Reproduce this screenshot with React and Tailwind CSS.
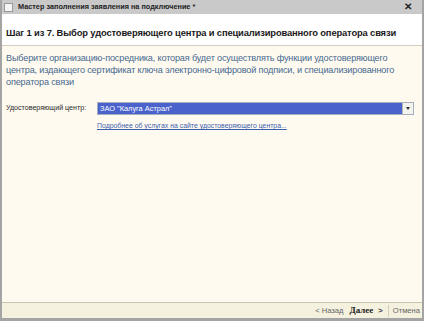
export default function App() {
  return (
    <div className="w-[424px] h-[321px] flex flex-col" style={{ fontFamily: '"Liberation Sans", Arial, sans-serif' }}>
      <div className="flex flex-col w-full h-full border-l-2 border-r-2 border-b-[3px] border-[#a4a4a4] bg-white">
        <div className="h-[14px] shrink-0 bg-[#c9c9c9] flex items-center pl-[2px] pr-[10px]">
          <div className="w-[9px] h-[9px] bg-[#f4f4f4] border border-[#9a9a9a] mr-[5px]"></div>
          <div className="text-[7.3px] font-bold text-[#222] flex-1 leading-none whitespace-nowrap">Мастер заполнения заявления на подключение *</div>
          <div className="text-[10px] font-bold text-[#222] leading-none">✕</div>
        </div>
        <div className="h-[32px] shrink-0 bg-white pt-[13px] px-[4px] border-b border-[#cfccc0]">
          <div className="text-[9.4px] leading-[12px] font-bold text-[#1a1a1a] whitespace-nowrap tracking-[-0.15px]">Шаг 1 из 7. Выбор удостоверяющего центра и специализированного оператора связи</div>
        </div>
        <div className="flex-1 bg-[#fffaf0] px-[4px] pt-[6px]">
          <div className="text-[9.1px] leading-[12px] text-[#46698f] tracking-[-0.15px]">
            <div className="whitespace-nowrap">Выберите организацию-посредника, которая будет осуществлять функции удостоверяющего</div>
            <div className="whitespace-nowrap">центра, издающего сертификат ключа электронно-цифровой подписи, и специализированного</div>
            <div className="whitespace-nowrap">оператора связи</div>
          </div>
          <div className="grid grid-cols-[91px_1fr] items-center mt-[14px] pr-[4px] gap-y-[6px]">
            <div className="text-[7.1px] text-[#2a2a2a] whitespace-nowrap">Удостоверяющий центр:</div>
            <div className="h-[13px] flex border border-[#a7aec0] bg-[#4a63cc]">
              <div className="flex-1 text-[7.4px] text-white leading-[11px] pl-[2px] whitespace-nowrap">ЗАО "Калуга Астрал"</div>
              <div className="w-[11px] bg-[#f3f3ee] border-l border-[#b8b8b8] flex items-center justify-center">
                <div className="w-0 h-0 border-l-[2.5px] border-r-[2.5px] border-t-[3px] border-l-transparent border-r-transparent border-t-[#333]"></div>
              </div>
            </div>
            <div></div>
            <div className="justify-self-start text-[6.9px] leading-[10px] text-[#3b5fae] underline whitespace-nowrap">Подробнее об услугах на сайте удостоверяющего центра...</div>
          </div>
        </div>
        <div className="h-[16px] shrink-0 bg-[#f4f1de] border-t border-[#c9c5b0] flex items-center justify-end pr-[2px] text-[7.6px] text-[#666]">
          <span>&lt;&nbsp;Назад</span>
          <span className="ml-[6px] font-bold text-[#222] text-[9px]" style={{ fontFamily: '"Liberation Serif", serif' }}>Далее</span>
          <span className="ml-[5px] font-bold text-[#444]">&gt;</span>
          <span className="ml-[5px] h-[12px] border-l border-[#d4d0c0]"></span>
          <span className="ml-[4px]">Отмена</span>
        </div>
      </div>
    </div>
  );
}
